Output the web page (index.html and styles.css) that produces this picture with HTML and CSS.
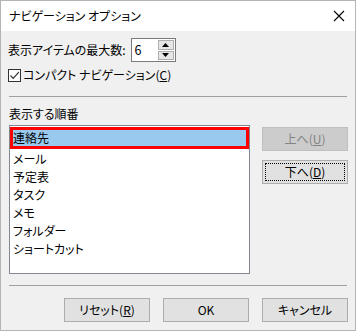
FILE: index.html
```html
<!DOCTYPE html>
<html lang="ja">
<head>
<meta charset="utf-8">
<link rel="stylesheet" href="styles.css">
</head>
<body>
<div class="window">
  <div class="titlebar">
    <span class="title">ナビゲーション オプション</span>
    <svg class="close" width="12" height="12" viewBox="0 0 12 12"><path d="M1 1 L11 11 M11 1 L1 11" stroke="#000" stroke-width="1.1" fill="none"/></svg>
  </div>
  <div class="content">
    <div class="row-max">
      <span class="label">表示アイテムの最大数:</span>
      <div class="spinner">
        <div class="spin-field">6</div>
        <div class="spin-btns">
          <div class="spin-btn"><svg width="7" height="4" viewBox="0 0 7 4"><path d="M0 4 L3.5 0 L7 4 Z" fill="#000"/></svg></div>
          <div class="spin-btn"><svg width="7" height="4" viewBox="0 0 7 4"><path d="M0 0 L7 0 L3.5 4 Z" fill="#000"/></svg></div>
        </div>
      </div>
    </div>
    <div class="row-check">
      <span class="checkbox"><svg width="11" height="11" viewBox="0 0 11 11"><path d="M1.5 5.5 L4.2 8.3 L9.8 2.2" stroke="#333" stroke-width="1.2" fill="none"/></svg></span>
      <span class="label">コンパクト ナビゲーション(<u>C</u>)</span>
    </div>
    <div class="sep sep-top"></div>
    <div class="section-label">表示する順番</div>
    <div class="main">
      <div class="listbox">
        <div class="item selected">連絡先</div>
        <div class="item">メール</div>
        <div class="item">予定表</div>
        <div class="item">タスク</div>
        <div class="item">メモ</div>
        <div class="item">フォルダー</div>
        <div class="item">ショートカット</div>
      </div>
      <div class="side-btns">
        <div class="btn disabled">上へ(<u>U</u>)</div>
        <div class="btn focused"><span class="focus-ring">下へ(<u>D</u>)</span></div>
      </div>
    </div>
    <div class="sep sep-bottom"></div>
    <div class="footer">
      <div class="btn">リセット(<u>R</u>)</div>
      <div class="btn">OK</div>
      <div class="btn">キャンセル</div>
    </div>
  </div>
</div>
</body>
</html>
```

FILE: styles.css
```css
* { box-sizing: border-box; }
html, body {
  margin: 0;
  padding: 0;
  background: #f0f0f0;
}
body {
  font-family: "Noto Sans CJK JP", "Noto Sans", sans-serif;
  font-size: 12px;
  font-feature-settings: "palt";
  color: #000;
}
.window {
  width: 356px;
  height: 331px;
  border: 1px solid #b4b4b4;
  background: #f0f0f0;
  display: flex;
  flex-direction: column;
}
.titlebar {
  height: 30px;
  background: #fff;
  display: flex;
  align-items: center;
  justify-content: space-between;
  padding: 0 10px 0 8px;
  flex-shrink: 0;
}
.title {
  font-size: 12px;
  line-height: 16px;
}
.close {
  display: block;
}
.content {
  padding: 0 7px;
  display: flex;
  flex-direction: column;
}
.row-max {
  display: flex;
  align-items: center;
  margin-top: 7px;
  height: 24px;
}
.label {
  line-height: 16px;
}
.spinner {
  margin-left: 5px;
  width: 45px;
  height: 24px;
  display: flex;
  border: 1px solid #7a7a7a;
  background: #fff;
}
.spin-field {
  flex: 1;
  padding-left: 3px;
  line-height: 21px;
  font-size: 12.5px;
}
.spin-btns {
  width: 17px;
  display: flex;
  flex-direction: column;
  gap: 1px;
  padding: 1px 1px 1px 0;
}
.spin-btn {
  flex: 1;
  background: #e6e6e6;
  border: 1px solid #adadad;
  display: flex;
  align-items: center;
  justify-content: center;
}
.spin-btn svg { display: block; }
.row-check {
  display: flex;
  align-items: center;
  margin-top: 5px;
  height: 16px;
}
.checkbox {
  width: 13px;
  height: 13px;
  border: 1px solid #333;
  background: #fff;
  display: flex;
  align-items: center;
  justify-content: center;
  margin-right: 2px;
}
.checkbox svg { display: block; }
.sep {
  height: 1px;
  background: #a0a0a0;
  margin-left: 1px;
  margin-right: 1px;
}
.sep-top { margin-top: 13px; }
.section-label {
  margin-top: 9px;
  line-height: 16px;
  padding-left: 1px;
}
.main {
  display: flex;
  margin-top: 3px;
  padding-left: 1px;
}
.listbox {
  width: 241px;
  height: 149px;
  border: 1px solid #828790;
  background: #fff;
  padding: 1px 0 0 0;
}
.item {
  height: 18px;
  line-height: 18px;
  padding-left: 3px;
}
.item.selected {
  height: 22px;
  line-height: 16px;
  background: #99c9ef;
  border: 3px solid #ff0000;
  padding-left: 0;
  margin-bottom: 1px;
}
.side-btns {
  margin-left: 12px;
  display: flex;
  flex-direction: column;
  gap: 9px;
  padding-top: 2px;
}
.btn {
  width: 86px;
  height: 24px;
  background: #e1e1e1;
  border: 1px solid #adadad;
  display: flex;
  align-items: center;
  justify-content: center;
  line-height: 16px;
}
.btn.disabled {
  background: #cccccc;
  border-color: #bfbfbf;
  color: #838383;
}
.btn.focused {
  padding: 2px;
}
.focus-ring {
  flex: 1;
  align-self: stretch;
  border: 1px dotted #000;
  display: flex;
  align-items: center;
  justify-content: center;
}
.sep-bottom { margin-top: 11px; }
.footer {
  display: flex;
  justify-content: flex-end;
  gap: 13px;
  margin-top: 12px;
  padding-right: 0;
}
.footer .btn { width: 86px; }
```
